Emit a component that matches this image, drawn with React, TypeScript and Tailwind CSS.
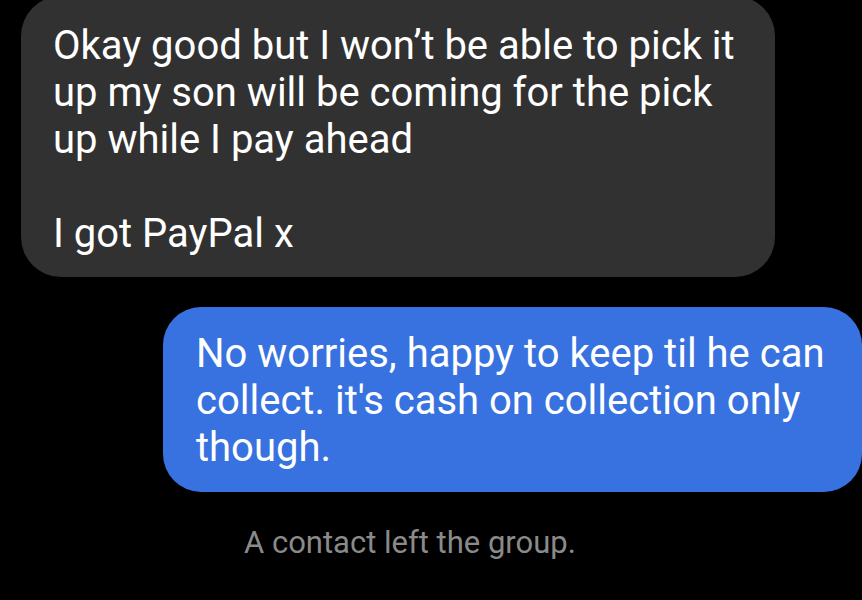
const font = { fontFamily: 'Roboto, "Noto Sans", sans-serif' }

function IncomingBubble({ lines }: { lines: string[] }) {
  return (
    <div className="-mt-[4px] ml-[21px] w-[754px] rounded-[40px] bg-[#313131] pb-[20px] pl-[32px] pt-[26px] text-[40px] leading-[47px] text-white">
      {lines.map((line, i) => (
        <div key={i} className="h-[47px] whitespace-nowrap">
          {line}
        </div>
      ))}
    </div>
  )
}

function OutgoingBubble({ lines }: { lines: string[] }) {
  return (
    <div className="ml-[163px] mt-[30px] w-[699px] rounded-[38px] bg-[#3872e0] pb-[21px] pl-[33px] pt-[23px] text-[40px] leading-[47px] text-white">
      {lines.map((line, i) => (
        <div key={i} className="whitespace-nowrap">
          {line}
        </div>
      ))}
    </div>
  )
}

export default function App() {
  return (
    <div className="flex h-[600px] w-full flex-col overflow-hidden bg-black" style={font}>
      <IncomingBubble
        lines={[
          'Okay good but I won’t be able to pick it',
          'up my son will be coming for the pick',
          'up while I pay ahead',
          '',
          'I got PayPal x',
        ]}
      />
      <OutgoingBubble
        lines={[
          'No worries, happy to keep til he can',
          "collect. it's cash on collection only",
          'though.',
        ]}
      />
      {/* system notice */}
      <div className="mt-[31px] pl-[244px] text-[31px] leading-[40px] text-[#8a8a8a]">
        A contact left the group.
      </div>
    </div>
  )
}
